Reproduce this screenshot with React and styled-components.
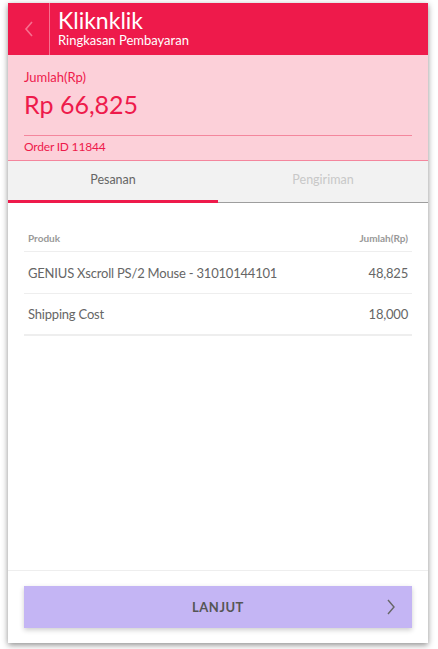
import React from "react";
import styled, { createGlobalStyle } from "styled-components";

const Global = createGlobalStyle`
  html, body { margin: 0; padding: 0; background: #fff; }
  body { font-family: "Source Sans Pro", Lato, "Noto Sans", sans-serif; }
  * { box-sizing: border-box; }
`;

const Page = styled.div`
  padding: 3px 10px 6px 8px;
  height: 649px;
`;

const Card = styled.div`
  width: 420px;
  height: 640px;
  background: #fff;
  box-shadow: 0 2px 6px rgba(0,0,0,0.45);
  display: flex;
  flex-direction: column;
`;

const Header = styled.div`
  height: 52px;
  flex: none;
  background: #ee1a4b;
  display: flex;
  align-items: stretch;
  color: #fff;
`;

const Back = styled.div`
  width: 42px;
  border-right: 1px solid #f7708f;
  display: flex;
  align-items: center;
  justify-content: center;
`;

const Titles = styled.div`
  padding-left: 8px;
  display: flex;
  flex-direction: column;
  justify-content: center;
`;

const Title = styled.div`
  font-size: 23px;
  line-height: 24px;
  margin-top: -3px;
`;

const Sub = styled.div`
  font-size: 13px;
  line-height: 16px;
`;

const Summary = styled.div`
  background: #fcd0d9;
  border-bottom: 1px solid #f4869d;
  padding: 14px 16px 6px;
  color: #ee1a4b;
`;

const Label = styled.div`
  font-size: 13px;
  line-height: 16px;
`;

const Amount = styled.div`
  font-size: 25px;
  line-height: 30px;
  margin-top: 4px;
  color: #ee1a4b;
`;

const Rule = styled.div`
  height: 1px;
  background: #f4869d;
  margin-top: 16px;
`;

const OrderId = styled.div`
  font-size: 12px;
  line-height: 14px;
  margin-top: 4px;
  letter-spacing: -0.2px;
`;

const Tabs = styled.div`
  display: flex;
  background: #f2f2f2;
  border-bottom: 1px solid #9e9e9e;
`;

const Tab = styled.div`
  flex: 1;
  height: 42px;
  display: flex;
  align-items: center;
  justify-content: center;
  font-size: 12.5px;
  padding-bottom: 2px;
  color: ${p => (p.$active ? "#666" : "#c8c8c8")};
  border-bottom: 3px solid ${p => (p.$active ? "#ee1a4b" : "transparent")};
  margin-bottom: -1px;
`;

const Body = styled.div`
  flex: 1;
  padding: 21px 16px 0;
`;

const Row = styled.div`
  display: flex;
  justify-content: space-between;
  align-items: center;
  padding: 0 4px;
  height: ${p => (p.$head ? "28px" : "42px")};
  border-bottom: ${p => (p.$last ? "2px" : "1px")} solid #eeeeee;
  font-size: ${p => (p.$head ? "10px" : "13px")};
  letter-spacing: ${p => (p.$head ? "0" : "-0.2px")};
  font-weight: ${p => (p.$head ? 700 : 400)};
  color: ${p => (p.$head ? "#999" : "#666")};
`;

const Footer = styled.div`
  border-top: 1px solid #eeeeee;
  padding: 15px 16px 15px;
`;

const Button = styled.div`
  height: 42px;
  background: #c4b5f4;
  box-shadow: 0 2px 5px rgba(0,0,0,0.2);
  display: flex;
  align-items: center;
  justify-content: center;
  position: relative;
  font-size: 13px;
  font-weight: 700;
  letter-spacing: 0.5px;
  color: #555;
`;

const Chevron = styled.svg`
  position: absolute;
  right: 16px;
  top: 13px;
`;

export default function App() {
  return (
    <>
      <Global />
      <Page>
        <Card>
          <Header>
            <Back>
              <svg width="10" height="18" viewBox="0 0 10 18">
                <polyline points="8,2 2,9 8,16" fill="none" stroke="#f7708f" strokeWidth="1.6" />
              </svg>
            </Back>
            <Titles>
              <Title>Kliknklik</Title>
              <Sub>Ringkasan Pembayaran</Sub>
            </Titles>
          </Header>
          <Summary>
            <Label>Jumlah(Rp)</Label>
            <Amount>Rp 66,825</Amount>
            <Rule />
            <OrderId>Order ID 11844</OrderId>
          </Summary>
          <Tabs>
            <Tab $active>Pesanan</Tab>
            <Tab>Pengiriman</Tab>
          </Tabs>
          <Body>
            <Row $head>
              <span>Produk</span>
              <span>Jumlah(Rp)</span>
            </Row>
            <Row>
              <span>GENIUS Xscroll PS/2 Mouse - 31010144101</span>
              <span>48,825</span>
            </Row>
            <Row $last>
              <span>Shipping Cost</span>
              <span>18,000</span>
            </Row>
          </Body>
          <Footer>
            <Button>
              LANJUT
              <Chevron width="10" height="16" viewBox="0 0 10 16">
                <polyline points="2,1 8,8 2,15" fill="none" stroke="#666" strokeWidth="1.4" />
              </Chevron>
            </Button>
          </Footer>
        </Card>
      </Page>
    </>
  );
}
